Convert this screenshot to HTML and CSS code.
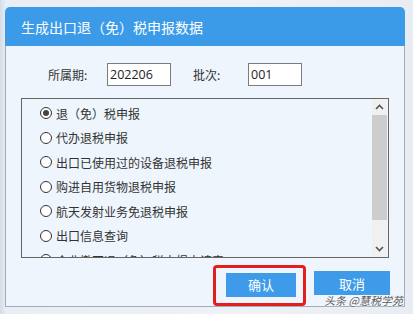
FILE: index.html
```html
<!DOCTYPE html>
<html lang="zh-CN">
<head>
    <meta charset="UTF-8">
    <title>生成出口退（免）税申报数据</title>
    <link rel="stylesheet" href="styles.css">
</head>
<body>
    <div class="dialog">
        <div class="dialog-title">生成出口退（免）税申报数据</div>

        <div class="dialog-body">
            <div class="fields">
                <span class="label label-period">所属期:</span>
                <span class="input input-period">202206</span>
                <span class="label label-batch">批次:</span>
                <span class="input input-batch">001</span>
            </div>

            <div class="listbox">
                <div class="items">
                    <div class="item"><span class="radio checked"></span>退（免）税申报</div>
                    <div class="item"><span class="radio"></span>代办退税申报</div>
                    <div class="item"><span class="radio"></span>出口已使用过的设备退税申报</div>
                    <div class="item"><span class="radio"></span>购进自用货物退税申报</div>
                    <div class="item"><span class="radio"></span>航天发射业务免退税申报</div>
                    <div class="item"><span class="radio"></span>出口信息查询</div>
                    <div class="item"><span class="radio"></span>企业撤回退（免）税申报申请表</div>
                </div>
                <div class="scrollbar">
                    <div class="arrow">
                        <svg width="9" height="6" viewBox="0 0 9 6"><path d="M1 5 L4.5 1.5 L8 5" fill="none" stroke="#555" stroke-width="1.6"/></svg>
                    </div>
                    <div class="thumb"></div>
                    <div class="track"></div>
                    <div class="arrow">
                        <svg width="9" height="6" viewBox="0 0 9 6"><path d="M1 1 L4.5 4.5 L8 1" fill="none" stroke="#555" stroke-width="1.6"/></svg>
                    </div>
                </div>
            </div>

            <div class="buttons">
                <div class="highlight">
                    <button class="btn btn-ok">确认</button>
                </div>
                <button class="btn btn-cancel">取消</button>
            </div>
        </div>
    </div>

    <div class="watermark">头条 @慧税学苑</div>
</body>
</html>
```

FILE: styles.css
```css
body {
    margin: 0;
    height: 314px;
    overflow: hidden;
    font-family: "Noto Sans CJK SC", "Noto Sans", sans-serif;
    background: linear-gradient(90deg, #d3dde8 0px, #e9eef4 6px, #eef2f6 60%, #e8edf3 100%);
    position: relative;
}

.dialog {
    width: 400px;
    height: 299px;
    margin: 7px 0 0 5px;
    display: flex;
    flex-direction: column;
}

.dialog-title {
    height: 39px;
    flex: none;
    background-color: #3b9be8;
    color: #fff;
    font-size: 14px;
    line-height: 40px;
    padding-left: 16px;
    border-radius: 5px 5px 0 0;
}

.dialog-body {
    flex: 1;
    background-color: #eef5fd;
    border: 1px solid #a3adb8;
    border-top: none;
    display: flex;
    flex-direction: column;
}

/* 所属期 / 批次 */
.fields {
    display: flex;
    align-items: center;
    height: 23px;
    margin-top: 17px;
    font-size: 12px;
    color: #333;
}

.label-period {
    margin-left: 42px;
    width: 59px;
}

.label-batch {
    margin-left: 22px;
    width: 55px;
}

.input {
    box-sizing: border-box;
    height: 23px;
    border: 1px solid #7c7c7c;
    background-color: #fff;
    font-family: "Open Sans", "Noto Sans", sans-serif;
    font-size: 12.5px;
    line-height: 21px;
    padding-left: 2px;
    color: #222;
}

.input-period {
    width: 64px;
}

.input-batch {
    width: 54px;
}

/* 列表 */
.listbox {
    box-sizing: border-box;
    height: 160px;
    margin: 12px 0 0 15px;
    width: 368px;
    border: 1px solid #666;
    display: flex;
    overflow: hidden;
}

.items {
    flex: 1;
    padding-top: 2px;
    overflow: hidden;
}

.item {
    height: 24.5px;
    display: flex;
    align-items: center;
    padding-left: 18px;
    font-size: 12px;
    color: #333;
    white-space: nowrap;
}

.radio {
    box-sizing: border-box;
    width: 12px;
    height: 12px;
    border: 1px solid #333;
    border-radius: 50%;
    margin-right: 4px;
    background-color: #fff;
    position: relative;
}

.radio.checked::after {
    content: "";
    position: absolute;
    left: 2px;
    top: 2px;
    width: 6px;
    height: 6px;
    border-radius: 50%;
    background-color: #444;
}

.scrollbar {
    width: 15px;
    flex: none;
    margin-right: 1px;
    background-color: #f0f0f0;
    display: flex;
    flex-direction: column;
}

.arrow {
    height: 16px;
    display: flex;
    align-items: center;
    justify-content: center;
}

.thumb {
    height: 105px;
    background-color: #cdcdcd;
}

.track {
    flex: 1;
}

/* 按钮 */
.buttons {
    display: flex;
    align-items: flex-start;
    margin-top: 7px;
}

.highlight {
    margin-left: 207px;
    width: 77px;
    height: 32px;
    border: 3px solid #e41e1e;
    border-radius: 4px;
    padding: 3px 0 0 10px;
}

.btn {
    height: 24px;
    border: none;
    background-color: #3d9be9;
    color: #fff;
    font-family: "Noto Sans CJK SC", sans-serif;
    font-size: 13px;
    padding: 0;
}

.btn-ok {
    width: 70px;
}

.btn-cancel {
    width: 76px;
    margin: 6px 0 0 8px;
}

/* 水印 */
.watermark {
    position: absolute;
    right: 10px;
    top: 292px;
    font-size: 11px;
    font-style: italic;
    color: #5a5a5a;
    text-shadow: 0 0 2px #fff, 0 0 2px #fff;
    white-space: nowrap;
}
```
